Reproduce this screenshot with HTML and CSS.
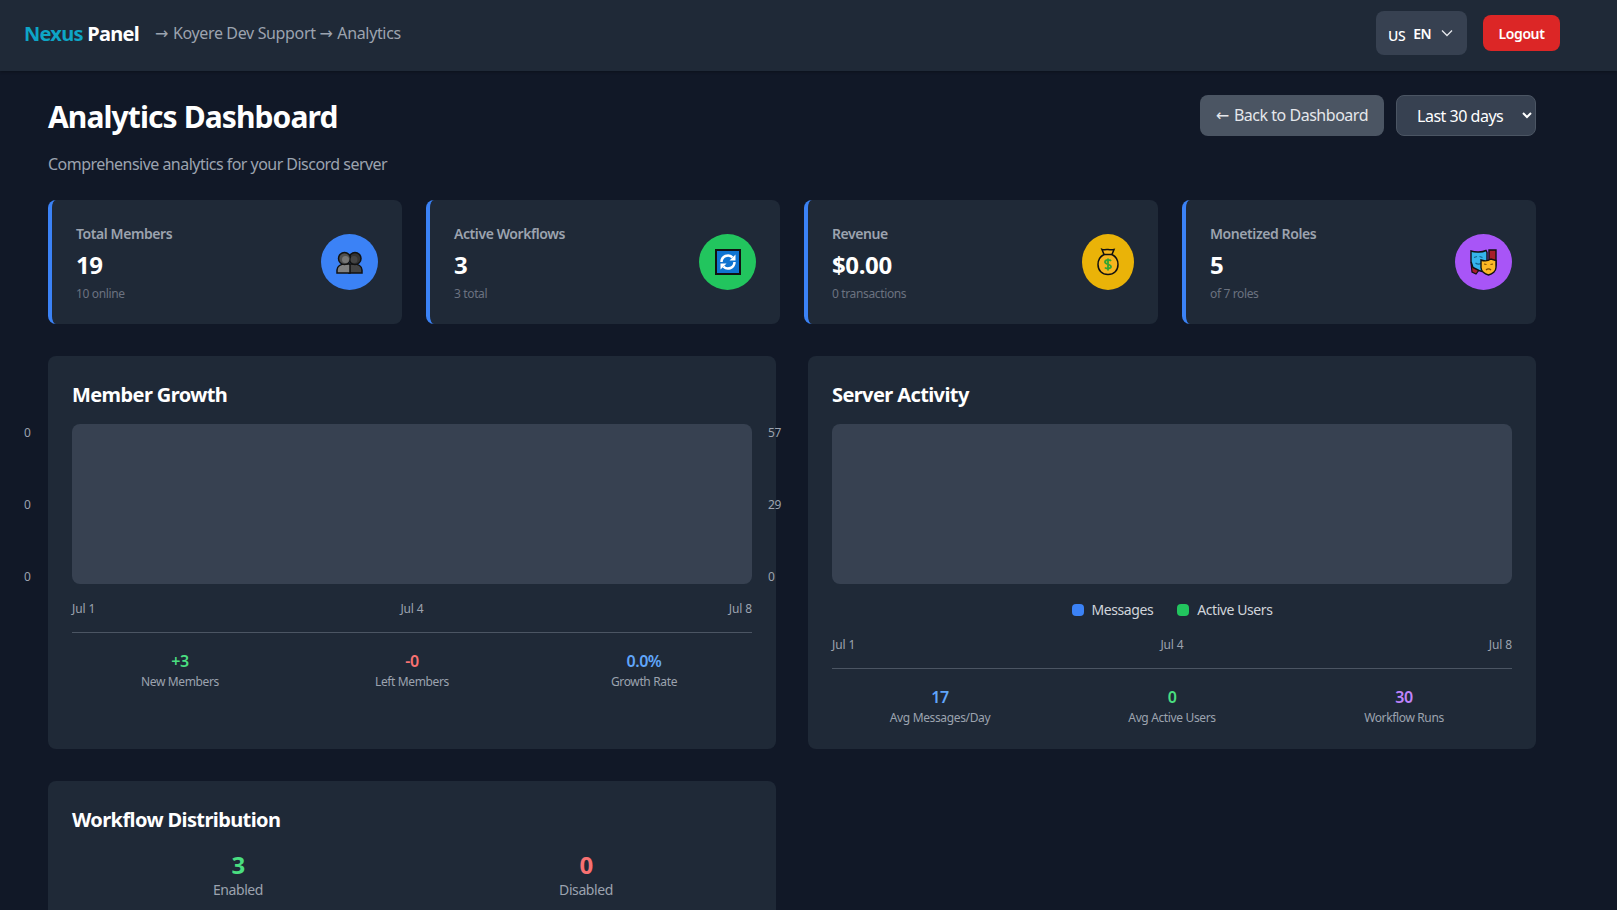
FILE: index.html
```html
<!DOCTYPE html>
<html lang="en">
<head>
  <meta charset="UTF-8" />
  <meta name="viewport" content="width=device-width, initial-scale=1.0" />
  <title>Analytics Dashboard</title>
  <link rel="stylesheet" href="styles.css">
</head>
<body>
  <header class="topbar">
    <div class="crumbs">
      <span class="logo"><span class="logo-accent">Nexus</span> Panel</span>
      <span class="path"><span class="arrow">→</span> Koyere Dev Support <span class="arrow">→</span> Analytics</span>
    </div>
    <div class="topbar-actions">
      <button class="lang">
        <span class="lang-flag">US</span>
        <span class="lang-code">EN</span>
        <svg class="lang-chevron" viewBox="0 0 12 8" width="12" height="8"><path d="M1 1.500l5 5 5-5" fill="none" stroke="#e5e7eb" stroke-width="1.300"/></svg>
      </button>
      <button class="logout">Logout</button>
    </div>
  </header>

  <main class="page">
    <div class="page-head">
      <div>
        <h1>Analytics Dashboard</h1>
        <p class="subtitle">Comprehensive analytics for your Discord server</p>
      </div>
      <div class="page-actions">
        <a class="back" href="#"><span class="arrow">←</span> Back to Dashboard</a>
        <select class="range">
          <option>Last 30 days</option>
        </select>
      </div>
    </div>

    <section class="stats">
      <div class="stat">
        <div class="stat-text">
          <p class="stat-label">Total Members</p>
          <p class="stat-value">19</p>
          <p class="stat-note">10 online</p>
        </div>
        <div class="stat-icon icon-blue">
          <svg viewBox="0 0 27 23" width="27" height="23">
            <path d="M13 22v-9h5c4 0 8 2 8 6v3z" fill="#444" stroke="#111" stroke-width="1.500"/>
            <path d="M1 22v-3c0-4 4-6 8-6h4c1 0 1 0 1 1v8z" fill="#808080" stroke="#111" stroke-width="1.500"/>
            <circle cx="19" cy="7.500" r="6" fill="#333" stroke="#111" stroke-width="1.500"/>
            <circle cx="8.500" cy="7.500" r="6" fill="#505050" stroke="#111" stroke-width="1.500"/>
            <circle cx="9.500" cy="8.500" r="3.500" fill="#777"/>
            <circle cx="18" cy="8.500" r="3.500" fill="#454545"/>
          </svg>
        </div>
      </div>
      <div class="stat">
        <div class="stat-text">
          <p class="stat-label">Active Workflows</p>
          <p class="stat-value">3</p>
          <p class="stat-note">3 total</p>
        </div>
        <div class="stat-icon icon-green">
          <svg viewBox="0 0 26 26" width="26" height="26">
            <rect x="1" y="1" width="24" height="24" fill="#0f74d1" stroke="#111" stroke-width="2"/>
            <path d="M6.500 13a6.500 6.500 0 0 1 11-4.700" fill="none" stroke="#fff" stroke-width="2.500"/>
            <path d="M19.500 13a6.500 6.500 0 0 1-11 4.700" fill="none" stroke="#fff" stroke-width="2.500"/>
            <path d="M20.500 5.500v6h-6zM5.500 20.500v-6h6z" fill="#fff"/>
          </svg>
        </div>
      </div>
      <div class="stat">
        <div class="stat-text">
          <p class="stat-label">Revenue</p>
          <p class="stat-value">$0.00</p>
          <p class="stat-note">0 transactions</p>
        </div>
        <div class="stat-icon icon-yellow">
          <svg viewBox="0 0 22 28" width="22" height="28">
            <path d="M5 1.500c2 1 3-.5 6 0s4 .5 6 0l-2 5c4 2 6 6 6 10 0 6-4 10-10 10s-10-4-10-10c0-4 2-8 6-10z" fill="#f5b51e" stroke="#111" stroke-width="1.500"/>
            <path d="M7 6.500h8" stroke="#111" stroke-width="1.500"/>
            <path d="M14 13c-1-1.500-6-1.500-6 1s6 2 6 4.500-5 2.500-6 1M11 10.500v12" fill="none" stroke="#33a532" stroke-width="1.800"/>
          </svg>
        </div>
      </div>
      <div class="stat">
        <div class="stat-text">
          <p class="stat-label">Monetized Roles</p>
          <p class="stat-value">5</p>
          <p class="stat-note">of 7 roles</p>
        </div>
        <div class="stat-icon icon-purple">
          <svg viewBox="0 0 27 27" width="27" height="27">
            <path d="M19 1h7v15l-2 6-5-4z" fill="#a81f2b" stroke="#111" stroke-width="1.400"/>
            <path d="M1 14l1 9 4 2 3-4z" fill="#a81f2b" stroke="#111" stroke-width="1.200"/>
            <path d="M1 2c4 1.500 11 1.500 15-.5l1 2v11c0 4-3 7-5 8l-3-1-6-3-2-6z" fill="#35b4ec" stroke="#111" stroke-width="1.400"/>
            <path d="M4 8.500l3-1M9.500 7.500l3 1M5.500 14c2 1.500 4 1.500 6 0" fill="none" stroke="#14628a" stroke-width="1.200"/>
            <path d="M11 11c2.500 1 7 1 10-1l5 1.500v7c0 3.500-3.500 6.500-7.500 7.500-4-1-7.500-4-7.500-7.500z" fill="#fbb825" stroke="#111" stroke-width="1.400"/>
            <path d="M14 15l2.500.5M20.500 15.500l2.500-.5M16 21c1.500-1.500 3.500-1.500 5 0" fill="none" stroke="#7a4a00" stroke-width="1.200"/>
          </svg>
        </div>
      </div>
    </section>

    <section class="panels">
      <div class="panel">
        <h2>Member Growth</h2>
        <div class="chart">
          <div class="axis axis-left"><span>0</span><span>0</span><span>0</span></div>
          <div class="plot"></div>
          <div class="axis axis-right"><span>57</span><span>29</span><span>0</span></div>
        </div>
        <div class="dates"><span>Jul 1</span><span>Jul 4</span><span>Jul 8</span></div>
        <div class="totals">
          <div><p class="total-value green">+3</p><p class="total-label">New Members</p></div>
          <div><p class="total-value red">-0</p><p class="total-label">Left Members</p></div>
          <div><p class="total-value blue">0.0%</p><p class="total-label">Growth Rate</p></div>
        </div>
      </div>

      <div class="panel">
        <h2>Server Activity</h2>
        <div class="chart">
          <div class="plot"></div>
        </div>
        <div class="legend">
          <span class="legend-item"><i class="swatch swatch-blue"></i>Messages</span>
          <span class="legend-item"><i class="swatch swatch-green"></i>Active Users</span>
        </div>
        <div class="dates"><span>Jul 1</span><span>Jul 4</span><span>Jul 8</span></div>
        <div class="totals">
          <div><p class="total-value blue">17</p><p class="total-label">Avg Messages/Day</p></div>
          <div><p class="total-value green">0</p><p class="total-label">Avg Active Users</p></div>
          <div><p class="total-value purple">30</p><p class="total-label">Workflow Runs</p></div>
        </div>
      </div>

      <div class="panel">
        <h2>Workflow Distribution</h2>
        <div class="split">
          <div><p class="split-value green">3</p><p class="split-label">Enabled</p></div>
          <div><p class="split-value red">0</p><p class="split-label">Disabled</p></div>
        </div>
      </div>
    </section>
  </main>
</body>
</html>
```

FILE: styles.css
```css
* {
  box-sizing: border-box;
  letter-spacing: -0.03em;
}
body {
  margin: 0;
  background-color: #111827;
  color: #fff;
  font-family: "Noto Sans", "Open Sans", sans-serif;
}
p, h1, h2 {
  margin: 0;
}
button {
  font-family: inherit;
  border: 0;
}
.arrow {
  font-family: "DejaVu Sans", sans-serif;
  letter-spacing: -0.05em;
}

.topbar {
  height: 71px;
  padding: 0 57px 5px 24px;
  background: #1f2937;
  display: flex;
  align-items: center;
  justify-content: space-between;
  box-shadow: 0 1px 3px rgba(0,0,0,0.3);
}
.crumbs {
  display: flex;
  align-items: center;
  gap: 16px;
}
.logo {
  font-size: 20px;
  font-weight: 700;
}
.logo, .logo-accent {
  letter-spacing: -0.036em;
}
.logo-accent {
  color: #0ea5c6;
}
.path {
  font-size: 16px;
  letter-spacing: -0.022em;
  color: #9ca3af;
}
.path .arrow {
  margin-right: 1.500px;
}
.topbar-actions {
  display: flex;
  align-items: center;
  gap: 16px;
}
.lang {
  width: 91px;
  height: 44px;
  padding: 0 12px;
  border-radius: 8px;
  background: #374151;
  color: #fff;
  display: flex;
  align-items: center;
  gap: 8px;
}
.lang-flag {
  font-size: 14px;
  font-weight: 500;
  padding-top: 4px;
}
.lang-code {
  font-size: 14px;
  font-weight: 600;
}
.lang-chevron {
  margin-left: 2px;
}
.logout {
  width: 77px;
  height: 36px;
  border-radius: 8px;
  background: #dc2626;
  color: #fff;
  font-size: 14px;
  font-weight: 600;
}

.page {
  width: 1536px;
  padding: 24px 0 32px 48px;
}
.page-head {
  display: flex;
  justify-content: space-between;
  align-items: flex-start;
  margin-bottom: 24px;
}
h1 {
  font-size: 30px;
  line-height: 44px;
  font-weight: 700;
}
.subtitle {
  margin-top: 13px;
  font-size: 16px;
  line-height: 24px;
  letter-spacing: -0.033em;
  color: #9ca3af;
}
.page-actions {
  display: flex;
  gap: 12px;
}
.back {
  height: 41px;
  padding: 0 16px;
  border-radius: 8px;
  background: #4b5563;
  color: #e5e7eb;
  font-size: 16px;
  line-height: 40px;
  text-decoration: none;
}
.back .arrow {
  margin-right: 2px;
}
.range {
  width: 140px;
  height: 41px;
  padding: 0 12px 0 16px;
  border: 1px solid #4b5563;
  border-radius: 8px;
  background: #374151;
  color: #fff;
  font-family: inherit;
  font-size: 16px;
}

.stats {
  display: grid;
  grid-template-columns: repeat(4, 1fr);
  gap: 24px;
  margin-bottom: 32px;
}
.stat {
  height: 124px;
  padding: 24px;
  border-left: 4px solid #3b82f6;
  border-radius: 8px;
  background: #1f2937;
  display: flex;
  align-items: center;
  justify-content: space-between;
}
.stat-text {
  padding-top: 2px;
}
.stat-label {
  font-size: 14px;
  line-height: 20px;
  font-weight: 600;
  color: #9ca3af;
}
.stat-value {
  margin-top: 5px;
  font-size: 24px;
  line-height: 32px;
  font-weight: 700;
  letter-spacing: -0.015em;
}
.stat-note {
  font-size: 12px;
  line-height: 16px;
  color: #6b7280;
  margin-top: 5px;
}
.stat-icon {
  height: 56px;
  width: 57px;
  border-radius: 50%;
  display: flex;
  align-items: center;
  justify-content: center;
}
.icon-blue { background: #3b82f6; }
.icon-green { background: #22c55e; }
.icon-yellow { background: #eab308; width: 52px; }
.icon-purple { background: #a855f7; }

.panels {
  display: grid;
  grid-template-columns: 1fr 1fr;
  gap: 32px;
}
.panel {
  padding: 24px 24px 23px;
  border-radius: 8px;
  background: #1f2937;
}
h2 {
  padding-top: 1px;
  font-size: 20px;
  line-height: 28px;
  font-weight: 700;
  margin-bottom: 15px;
}
.chart {
  position: relative;
}
.plot {
  height: 160px;
  border-radius: 8px;
  background: #374151;
}
.axis {
  position: absolute;
  top: 1px;
  height: 160px;
  display: flex;
  flex-direction: column;
  justify-content: space-between;
  font-size: 12px;
  line-height: 16px;
  color: #9ca3af;
}
.axis-left {
  left: -48px;
}
.axis-right {
  right: -29px;
  width: 13px;
}
.dates {
  display: flex;
  justify-content: space-between;
  margin-top: 17px;
  padding-bottom: 15px;
  border-bottom: 1px solid #4b5563;
  font-size: 12px;
  line-height: 16px;
  color: #9ca3af;
}
.dates span {
  letter-spacing: -0.01em;
}
.legend {
  display: flex;
  justify-content: center;
  gap: 24px;
  margin-top: 16px;
  font-size: 14px;
  line-height: 20px;
  color: #d1d5db;
}
.legend-item {
  display: flex;
  align-items: center;
  gap: 8px;
}
.swatch {
  width: 12px;
  height: 12px;
  border-radius: 4px;
}
.swatch-blue { background: #3b82f6; }
.swatch-green { background: #22c55e; }
.totals {
  display: grid;
  grid-template-columns: repeat(3, 1fr);
  gap: 16px;
  margin-top: 16px;
  text-align: center;
}
.total-value {
  font-size: 16px;
  line-height: 24px;
  font-weight: 600;
}
.total-label {
  margin-top: 1px;
  font-size: 12px;
  line-height: 16px;
  color: #9ca3af;
}
.split {
  display: grid;
  grid-template-columns: 1fr 1fr;
  gap: 16px;
  margin-top: 3px;
  text-align: center;
}
.split-value {
  font-size: 24px;
  line-height: 32px;
  font-weight: 700;
}
.split-label {
  margin-top: -1px;
  font-size: 14px;
  line-height: 20px;
  color: #9ca3af;
}
.green { color: #4ade80; }
.red { color: #f87171; }
.blue { color: #60a5fa; }
.purple { color: #c084fc; }
```
